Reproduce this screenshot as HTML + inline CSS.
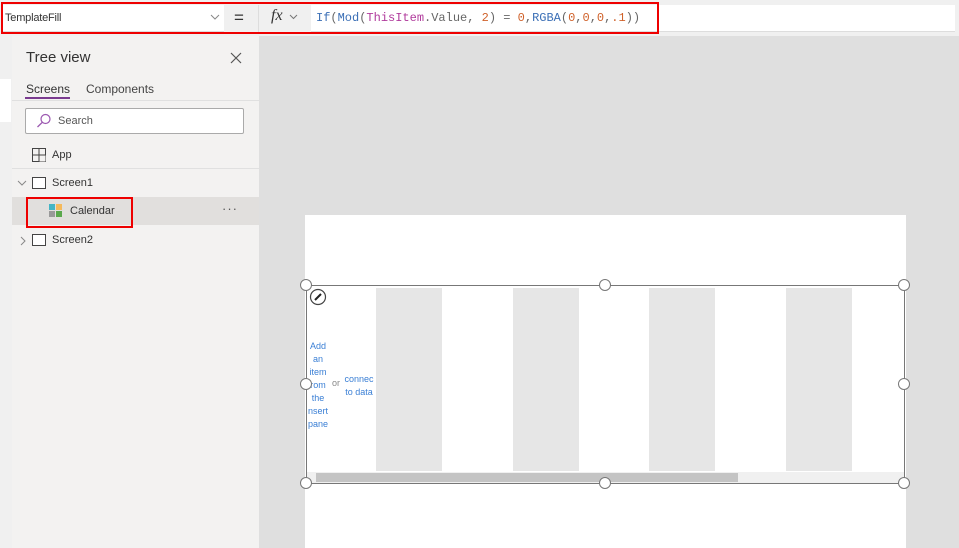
<!DOCTYPE html>
<html><head><meta charset="utf-8"><style>
*{margin:0;padding:0;box-sizing:border-box}
body{width:959px;height:548px;overflow:hidden;position:relative;background:#dfdfdf;font-family:"Liberation Sans",sans-serif;}
.a{position:absolute}
.mono{font-family:"Liberation Mono",monospace}
.h{position:absolute;width:12px;height:12px;border:1px solid #777;border-radius:50%;background:#fff}
.col{position:absolute;top:288px;width:66px;height:183px;background:#e6e6e6}
.bl{color:#3a7fd5;font-size:9px;text-align:center;line-height:13px}
</style></head><body>
<div class="a" style="left:0;top:0;width:959px;height:36px;background:#f0f0f0"></div>
<div class="a" style="left:3px;top:5px;width:952px;height:27px;background:#fff;border-bottom:1px solid #ddd"></div>
<div class="a" style="left:224px;top:5px;width:34px;height:27px;background:#f0f0f0"></div>
<div class="a" style="left:258px;top:5px;width:1px;height:27px;background:#ddd"></div>
<div class="a" style="left:259px;top:5px;width:52px;height:27px;background:#f0f0f0"></div>
<div class="a" style="left:5px;top:12px;font-size:11px;color:#333;letter-spacing:-0.2px">TemplateFill</div>
<svg class="a" style="left:210px;top:14px" width="10" height="7"><polyline points="1,1 5,5 9,1" fill="none" stroke="#888" stroke-width="1"/></svg>
<div class="a" style="left:234px;top:8px;font-size:17px;color:#333">=</div>
<div class="a" style="left:271px;top:7px;font-size:16px;font-style:italic;font-family:'Liberation Serif',serif;color:#333">fx</div>
<svg class="a" style="left:289px;top:14px" width="9" height="6"><polyline points="1,1 4.5,4.5 8,1" fill="none" stroke="#777" stroke-width="1"/></svg>
<div class="a mono" style="left:316px;top:11px;font-size:12px;color:#666;white-space:pre"><span style="color:#3b6fb6">If</span>(<span style="color:#3b6fb6">Mod</span>(<span style="color:#b03a9c">ThisItem</span>.Value, <span style="color:#d0622b">2</span>) = <span style="color:#d0622b">0</span>,<span style="color:#3b6fb6">RGBA</span>(<span style="color:#d0622b">0</span>,<span style="color:#d0622b">0</span>,<span style="color:#d0622b">0</span>,<span style="color:#d0622b">.1</span>))</div>
<div class="a" style="left:1px;top:2px;width:658px;height:32px;border:2px solid #e00"></div>
<div class="a" style="left:0;top:36px;width:12px;height:512px;background:#f0f0f0"></div>
<div class="a" style="left:0;top:79px;width:11px;height:43px;background:#fff"></div>
<div class="a" style="left:12px;top:36px;width:247px;height:512px;background:#f3f2f1"></div>
<div class="a" style="left:26px;top:49px;font-size:15px;color:#333">Tree view</div>
<svg class="a" style="left:230px;top:52px" width="12" height="12"><path d="M1 1L11 11M11 1L1 11" stroke="#555" stroke-width="1.2"/></svg>
<div class="a" style="left:26px;top:82px;font-size:12px;color:#333">Screens</div>
<div class="a" style="left:25px;top:97px;width:45px;height:2px;background:#7a3b8f"></div>
<div class="a" style="left:86px;top:82px;font-size:12px;color:#444">Components</div>
<div class="a" style="left:12px;top:100px;width:247px;height:1px;background:#e0e0e0"></div>
<div class="a" style="left:25px;top:108px;width:219px;height:26px;background:#fff;border:1px solid #aaa;border-radius:2px"></div>
<svg class="a" style="left:36px;top:113px" width="16" height="16"><circle cx="9.5" cy="6" r="4.5" fill="none" stroke="#9b57b0" stroke-width="1.2"/><line x1="6.3" y1="9.3" x2="1.5" y2="14" stroke="#9b57b0" stroke-width="1.3"/></svg>
<div class="a" style="left:58px;top:115px;font-size:11px;color:#555">Search</div>
<svg class="a" style="left:32px;top:148px" width="14" height="14"><rect x="0.5" y="0.5" width="13" height="13" fill="none" stroke="#444"/><line x1="0.5" y1="7" x2="13.5" y2="7" stroke="#444"/><line x1="7" y1="0.5" x2="7" y2="13.5" stroke="#444"/><rect x="7.5" y="7.5" width="6" height="6" fill="#f3f2f1"/></svg>
<div class="a" style="left:52px;top:149px;font-size:11px;color:#333">App</div>
<div class="a" style="left:12px;top:168px;width:247px;height:1px;background:#e0e0e0"></div>
<svg class="a" style="left:17px;top:180px" width="10" height="6"><polyline points="1,1 5,5 9,1" fill="none" stroke="#888"/></svg>
<div class="a" style="left:32px;top:177px;width:14px;height:12px;border:1px solid #444;background:#fff"></div>
<div class="a" style="left:52px;top:177px;font-size:11px;color:#333">Screen1</div>
<div class="a" style="left:12px;top:197px;width:247px;height:28px;background:#e1dfdd"></div>
<svg class="a" style="left:49px;top:204px" width="14" height="14"><rect x="0" y="0" width="6" height="6" fill="#45b5c4"/><rect x="7" y="0" width="6" height="6" fill="#f5b95b"/><rect x="0" y="7" width="6" height="6" fill="#999"/><rect x="7" y="7" width="6" height="6" fill="#5aa84c"/></svg>
<div class="a" style="left:70px;top:205px;font-size:11px;color:#333">Calendar</div>
<div class="a" style="left:222px;top:201px;font-size:13px;color:#555;letter-spacing:1px">&#183;&#183;&#183;</div>
<div class="a" style="left:26px;top:197px;width:107px;height:31px;border:2px solid #e00"></div>
<svg class="a" style="left:20px;top:236px" width="6" height="10"><polyline points="1,1 5,5 1,9" fill="none" stroke="#888"/></svg>
<div class="a" style="left:32px;top:234px;width:14px;height:12px;border:1px solid #444;background:#fff"></div>
<div class="a" style="left:52px;top:234px;font-size:11px;color:#333">Screen2</div>
<div class="a" style="left:305px;top:215px;width:601px;height:333px;background:#fff"></div>
<div class="col" style="left:376px"></div>
<div class="col" style="left:513px"></div>
<div class="col" style="left:649px"></div>
<div class="col" style="left:786px"></div>
<div class="a" style="left:307px;top:472px;width:597px;height:11px;background:#f0f0f0"></div>
<div class="a" style="left:316px;top:473px;width:422px;height:9px;background:#c4c4c4"></div>
<div class="a" style="left:306px;top:285px;width:599px;height:199px;border:1px solid #777"></div>
<svg class="a" style="left:309px;top:288px" width="18" height="18"><circle cx="9" cy="9" r="7.5" fill="#fff" stroke="#444" stroke-width="1.2"/><line x1="6" y1="12" x2="12" y2="6" stroke="#222" stroke-width="2"/></svg>
<div class="a bl" style="left:306px;top:340px;width:24px">Add<br>an<br>item<br>rom<br>the<br>nsert<br>pane</div>
<div class="a" style="left:332px;top:378px;font-size:9px;color:#888">or</div>
<div class="a bl" style="left:342px;top:373px;width:34px">connec<br>to data</div>
<div class="h" style="left:300px;top:279px"></div>
<div class="h" style="left:599px;top:279px"></div>
<div class="h" style="left:898px;top:279px"></div>
<div class="h" style="left:300px;top:378px"></div>
<div class="h" style="left:898px;top:378px"></div>
<div class="h" style="left:300px;top:477px"></div>
<div class="h" style="left:599px;top:477px"></div>
<div class="h" style="left:898px;top:477px"></div>
</body></html>
